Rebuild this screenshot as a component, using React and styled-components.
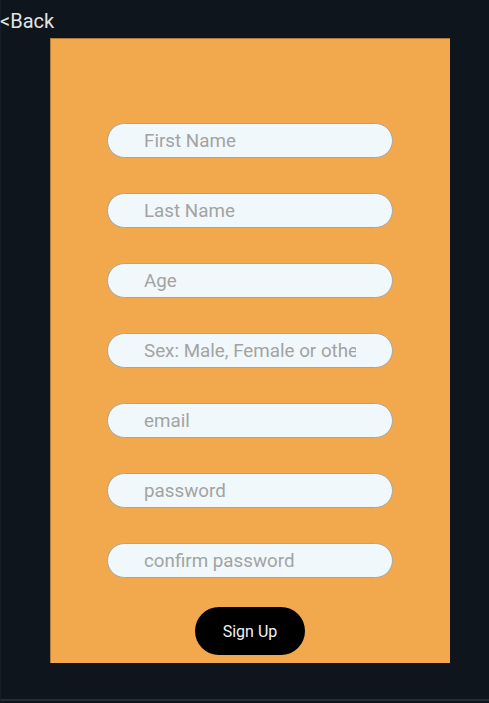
import React from 'react';
import styled, { createGlobalStyle } from 'styled-components';

const Global = createGlobalStyle`
  html, body {
    margin: 0;
    padding: 0;
    background: #0e151d;
  }
  body {
    font-family: Roboto, "Liberation Sans", sans-serif;
  }
`;

const Page = styled.div`
  height: 701px;
  border-bottom: 2px solid #262c33;
  border-left: 1px solid #161d25;
  box-sizing: border-box;
  display: flex;
  flex-direction: column;
`;

const Back = styled.a`
  display: block;
  color: #e3e3e3;
  font-size: 20px;
  line-height: 22px;
  height: 38px;
  padding-top: 10px;
  box-sizing: border-box;
  margin-left: -1px;
  text-decoration: none;
  cursor: pointer;
`;

const Card = styled.form`
  width: 400px;
  height: 625px;
  margin-left: 49px;
  background: #f2a84c;
  box-shadow: inset 1px 1px 0 #b27a38;
  box-sizing: border-box;
  display: flex;
  flex-direction: column;
  align-items: center;
  padding-top: 85px;
`;

const Fields = styled.div`
  display: flex;
  flex-direction: column;
  gap: 35px;
  flex-shrink: 0;
`;

const Input = styled.input`
  width: 286px;
  height: 35px;
  box-sizing: border-box;
  border: 1px solid #a9a59c;
  border-radius: 18px;
  background: #f0f8fb;
  padding: 0 36px;
  font-family: Roboto, "Liberation Sans", sans-serif;
  font-size: 18.8px;
  color: #333;
  outline: none;

  &::placeholder {
    color: #a3a3a3;
  }
`;

const Button = styled.button`
  flex-shrink: 0;
  margin-top: 29px;
  width: 110px;
  height: 48px;
  border: none;
  border-radius: 24px;
  background: #000;
  color: #f2f2f2;
  font-family: Roboto, "Liberation Sans", sans-serif;
  font-size: 16px;
  cursor: pointer;
`;

const fields = [
  'First Name',
  'Last Name',
  'Age',
  'Sex: Male, Female or other',
  'email',
  'password',
  'confirm password',
];

function App() {
  return (
    <Page>
      <Global />
      <Back>&lt;Back</Back>
      <Card onSubmit={(e) => e.preventDefault()}>
        <Fields>
          {fields.map((f) => (
            <Input key={f} placeholder={f} type={f.includes('password') ? 'password' : 'text'} />
          ))}
        </Fields>
        <Button type="submit">Sign Up</Button>
      </Card>
    </Page>
  );
}

export default App;
